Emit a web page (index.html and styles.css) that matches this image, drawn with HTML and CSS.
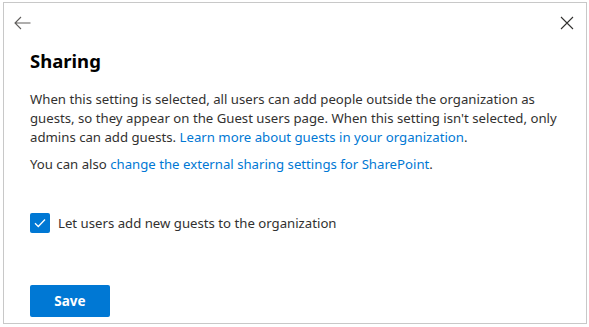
FILE: index.html
```html
<!DOCTYPE html>
<html lang="en">
<head>
<meta charset="utf-8">
<title>Sharing</title>
<link rel="stylesheet" href="styles.css">
</head>
<body>
<div class="panel">
  <div class="topbar">
    <button class="icon-btn" aria-label="Back">
      <svg width="17" height="14" viewBox="0 0 17 14"><path d="M16.5 7H1.2M7 1L1 7l6 6" fill="none" stroke="#605e5c" stroke-width="1.1"/></svg>
    </button>
    <button class="icon-btn" aria-label="Close">
      <svg width="14" height="14" viewBox="0 0 14 14"><path d="M1 1l12 12M13 1L1 13" fill="none" stroke="#323130" stroke-width="1.1"/></svg>
    </button>
  </div>
  <div class="content">
    <h1 class="title">Sharing</h1>
    <p class="desc">When this setting is selected, all users can add people outside the organization as guests, so they appear on the Guest users page. When this setting isn't selected, only admins can add guests. <a href="#">Learn more about guests in your organization</a>.</p>
    <p class="desc">You can also <a href="#">change the external sharing settings for SharePoint</a>.</p>
    <label class="check">
      <span class="box"><svg width="12" height="10" viewBox="0 0 12 10"><path d="M1 5.2l3.3 3.3L11 1.5" fill="none" stroke="#fff" stroke-width="1.3"/></svg></span>
      <span class="check-label">Let users add new guests to the organization</span>
    </label>
    <div class="spacer"></div>
    <button class="save">Save</button>
  </div>
</div>
</body>
</html>
```
FILE: styles.css
```css
html, body {
  margin: 0;
  padding: 0;
  background: #fff;
}
body {
  font-family: "Noto Sans", "Open Sans", sans-serif;
  color: #323130;
  padding: 2px 2px 3px 3px;
  height: 327px;
  box-sizing: border-box;
}
.panel {
  border: 1px solid #c8c8c8;
  height: 100%;
  box-sizing: border-box;
  display: flex;
  flex-direction: column;
}
.topbar {
  display: flex;
  justify-content: space-between;
  align-items: center;
  padding: 10px 12px 0 10px;
  height: 20px;
}
.icon-btn {
  border: 0;
  background: none;
  padding: 0;
  display: flex;
  align-items: center;
}
.content {
  padding: 0 26px;
  display: flex;
  flex-direction: column;
  flex: 1;
}
.title {
  font-size: 18.5px;
  font-weight: 700;
  margin: 15px 0 16px;
  line-height: 26px;
  color: #000;
}
.desc {
  font-size: 13.2px;
  line-height: 19px;
  margin: 0 0 8px;
}
a {
  color: #0078d4;
  text-decoration: none;
}
.check {
  display: flex;
  align-items: center;
  gap: 8px;
  margin-top: 31px;
  font-size: 13.2px;
}
.box {
  width: 20px;
  height: 20px;
  border-radius: 2px;
  background: #0078d4;
  display: flex;
  align-items: center;
  justify-content: center;
}
.spacer { flex: 1; }
.save {
  width: 80px;
  height: 32px;
  background: #0078d4;
  color: #fff;
  border: 0;
  border-radius: 2px;
  font-family: inherit;
  font-size: 13.5px;
  font-weight: 700;
  margin-bottom: 6px;
}
```
